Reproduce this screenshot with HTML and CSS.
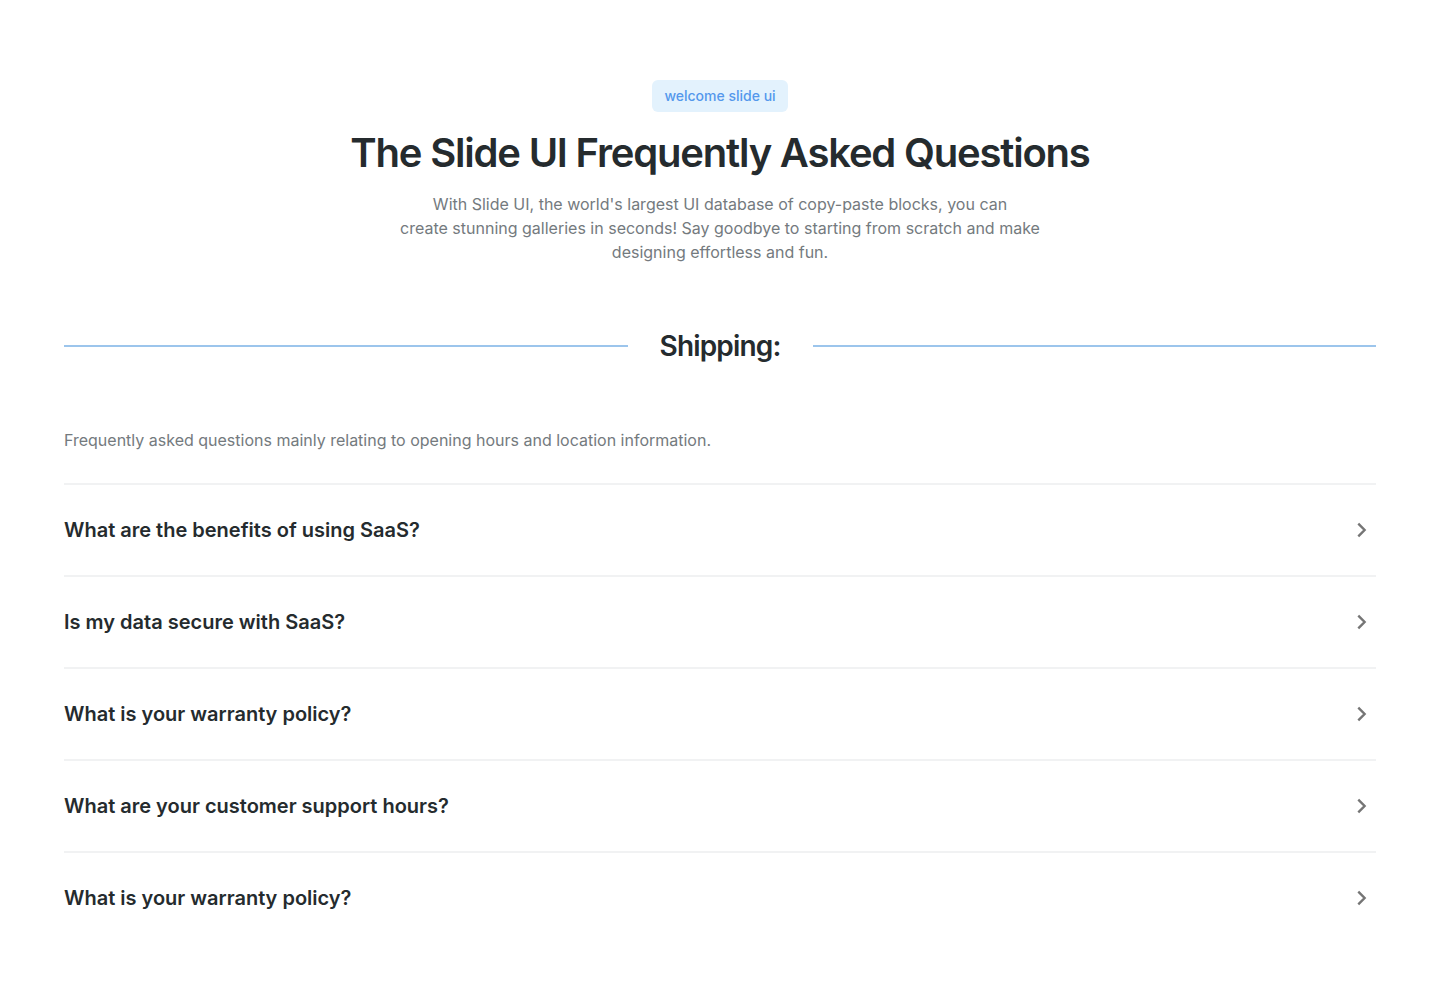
FILE: index.html
```html
<!DOCTYPE html>
<html lang="en">
<head>
<meta charset="utf-8">
<meta name="viewport" content="width=device-width, initial-scale=1">
<title>Slide UI FAQ</title>
<link rel="stylesheet" href="styles.css">
</head>
<body>
<main class="faq">
  <header class="intro">
    <span class="badge">welcome slide ui</span>
    <h1 class="title">The Slide UI Frequently Asked Questions</h1>
    <p class="lead">With Slide UI, the world's largest UI database of copy-paste blocks, you can<br> create stunning galleries in seconds! Say goodbye to starting from scratch and make designing effortless and fun.</p>
  </header>
  <h2 class="divider">Shipping:</h2>
  <section class="group">
    <p class="note">Frequently asked questions mainly relating to opening hours and location information.</p>
    <ul class="list">
      <li class="item"><button class="question" type="button">What are the benefits of using SaaS?<svg class="chevron" viewBox="0 0 28 28" aria-hidden="true"><path d="M10.300 7.700L16.600 14L10.300 20.300"/></svg></button></li>
      <li class="item"><button class="question" type="button">Is my data secure with SaaS?<svg class="chevron" viewBox="0 0 28 28" aria-hidden="true"><path d="M10.300 7.700L16.600 14L10.300 20.300"/></svg></button></li>
      <li class="item"><button class="question" type="button">What is your warranty policy?<svg class="chevron" viewBox="0 0 28 28" aria-hidden="true"><path d="M10.300 7.700L16.600 14L10.300 20.300"/></svg></button></li>
      <li class="item"><button class="question" type="button">What are your customer support hours?<svg class="chevron" viewBox="0 0 28 28" aria-hidden="true"><path d="M10.300 7.700L16.600 14L10.300 20.300"/></svg></button></li>
      <li class="item"><button class="question" type="button">What is your warranty policy?<svg class="chevron" viewBox="0 0 28 28" aria-hidden="true"><path d="M10.300 7.700L16.600 14L10.300 20.300"/></svg></button></li>
    </ul>
  </section>
</main>
</body>
</html>
```
FILE: styles.css
```css
* { box-sizing: border-box; }
body {
  margin: 0;
  background: #fff;
  color: #252b2e;
  font-family: Inter, "Liberation Sans", sans-serif;
}
.faq { padding: 80px 64px 48px; }
.intro {
  display: flex;
  flex-direction: column;
  align-items: center;
  text-align: center;
}
.badge {
  padding: 6px 12px;
  border-radius: 6px;
  background: #e3f2fd;
  color: #5498ec;
  font-size: 14px;
  font-weight: 500;
  line-height: 20px;
}
.title {
  margin: 16px 0 14px;
  font-size: 40px;
  font-weight: 600;
  line-height: 50px;
  letter-spacing: -0.03em;
}
.lead {
  max-width: 646px;
  margin: 0;
  color: #747a7e;
  font-size: 16px;
  line-height: 24px;
}
.divider {
  display: flex;
  align-items: center;
  gap: 32px;
  margin: 64px 0;
  font-size: 28px;
  font-weight: 600;
  line-height: 36px;
  letter-spacing: -0.03em;
}
.divider::before,
.divider::after {
  content: "";
  flex: 1;
  height: 2px;
  background: #9cc5ec;
}
.note {
  margin: 0 0 31px;
  color: #747a7e;
  font-size: 16px;
  line-height: 24px;
}
.list {
  margin: 0;
  padding: 0;
  list-style: none;
}
.item { border-top: 2px solid #f1f2f3; }
.question {
  display: flex;
  align-items: center;
  justify-content: space-between;
  width: 100%;
  padding: 31px 0;
  border: 0;
  background: none;
  color: inherit;
  font: 600 20px/28px Inter, "Liberation Sans", sans-serif;
  text-align: left;
  cursor: pointer;
}
.chevron {
  width: 28px;
  height: 28px;
  fill: none;
  stroke: #757575;
  stroke-width: 2.4;
}
```
